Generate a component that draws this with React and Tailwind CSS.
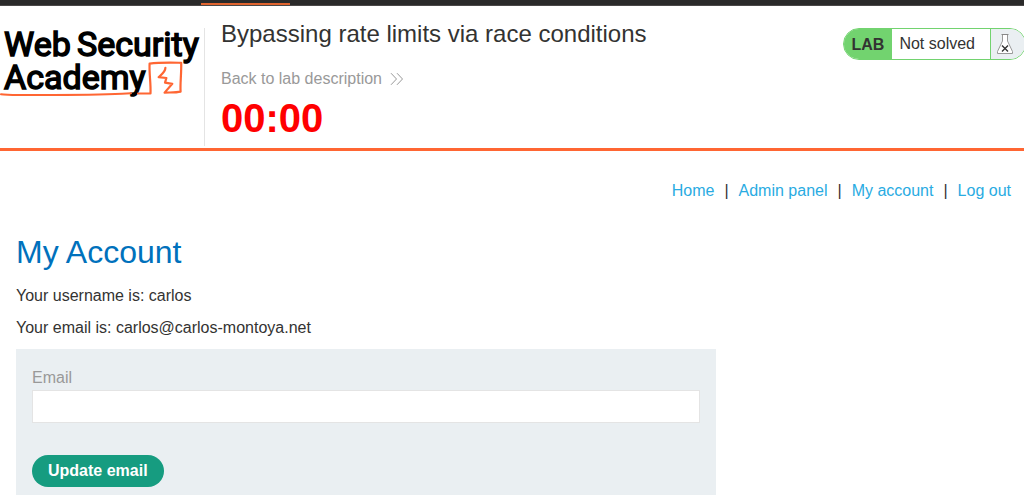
const navItems = ["Home", "Admin panel", "My account", "Log out"];

function AcademyLogo() {
  return (
    <svg viewBox="0 0 204 72" className="block h-[72px] w-[204px] overflow-visible" role="img" aria-label="Web Security Academy">
      <g fill="#000" stroke="#000" strokeWidth="1.5" fontFamily="Roboto, 'Liberation Sans', sans-serif" fontSize="34" fontWeight="400">
        <text x="4" y="28">Web</text>
        <text x="77" y="28">Security</text>
        <text x="4" y="61">Academy</text>
      </g>
      <g fill="none" stroke="#ff6633" strokeLinecap="round" strokeLinejoin="round">
        <path d="M1 66.3C8 67.6 20 67 40 66.9C80 66.9 105 66.5 122 65.7L131 65.2" strokeWidth="2" />
        <path d="M138 65.5L150.5 65.4C151 55 149 46 149.6 35.6C160 34.3 170 34.6 181.2 34.8C181.5 46 180 56 180.6 63.6C176 64.8 169 64.3 164.6 64.6L172.3 55.8L165 54.6L166.4 50L158.6 49.2C161 47 165.5 44 165.4 39.8" strokeWidth="2.2" />
      </g>
    </svg>
  );
}

function DoubleChevron() {
  return (
    <svg viewBox="0 0 14 14" className="h-3.5 w-3.5" fill="none" stroke="#999" strokeWidth="1" aria-hidden="true">
      <path d="M1 1.2L6.5 7L1 12.8M7 1.2L12.5 7L7 12.8" />
    </svg>
  );
}

function Flask() {
  return (
    <svg viewBox="0 0 18 22" className="h-[22px] w-[18px] shrink-0" fill="none" aria-hidden="true">
      <path d="M6.5 1.5V8L1.5 18.5V20.5H16.5V18.5L11.5 8V1.5Z" fill="#fff" stroke="#999" />
      <path d="M5.5 1.5H12.5" stroke="#888" />
      <path d="M6 12.5L12 18.5M12 12.5L6 18.5" stroke="#333" strokeWidth="1.4" />
    </svg>
  );
}

export default function App() {
  return (
    <div className="overflow-x-hidden bg-white font-['Liberation_Sans',Arial,sans-serif] text-base text-[#333332]">
      <div className="flex h-1.5 items-end border-b border-[#4a4848] bg-[#2a2a2a] pl-[201px]">
        <div className="h-0.5 w-[89px] bg-[#e0642f]" />
      </div>

      <header className="flex items-start border-b-3 border-[#ff6633] pb-0.5">
        <a href="#academy" className="mt-[22px] h-[118px] shrink-0 border-r border-[#e4e4e4]">
          <AcademyLogo />
        </a>
        <div className="flex-1 pl-4 pt-3">
          <h2 className="text-2xl leading-8">Bypassing rate limits via race conditions</h2>
          <a href="#description" className="mt-[17px] flex items-center gap-2 leading-6 text-[#999]">
            Back to lab description
            <DoubleChevron />
          </a>
          <p className="mt-[3px] text-[40px] font-bold leading-12 text-[#ff0000]">00:00</p>
        </div>
        <div className="-mr-0.5 mt-[22px] flex h-8 shrink-0 overflow-hidden rounded-full border border-[#72d36f] bg-white leading-[30px]">
          <span className="bg-[#72d36f] px-2 font-bold leading-8">LAB</span>
          <p className="border-r border-[#72d36f] pl-[7px] pr-[15px]">Not solved</p>
          <span className="flex items-center bg-[#eaeff2] pl-[5px] pr-[11px]">
            <Flask />
          </span>
        </div>
      </header>

      <nav className="flex justify-end gap-2.5 px-[13px] pt-7 leading-6">
        {navItems.map((item, index) => (
          <span key={item} className="flex gap-2.5">
            {index > 0 && <span>|</span>}
            <a href="#nav" className="text-[#29abe2]">{item}</a>
          </span>
        ))}
      </nav>

      <main className="px-4 pt-[25px]">
        <h1 className="text-[32px] leading-12 text-[#0071bc]">My Account</h1>
        <p className="mt-2 leading-6">Your username is: carlos</p>
        <p className="mt-2 leading-6">Your email is: carlos@carlos-montoya.net</p>
        <form className="mt-[9px] max-w-[700px] bg-[#eaeff2] px-4 pb-2 pt-[17px]" onSubmit={(event) => event.preventDefault()}>
          <label htmlFor="email" className="block leading-6 text-[#999]">Email</label>
          <input id="email" type="email" className="block h-[33px] w-full border border-[#e4e4e4] bg-white px-2 outline-none" />
          <button type="submit" className="mt-8 block h-8 rounded-full bg-[#169c80] px-4 font-bold text-white">
            Update email
          </button>
        </form>
      </main>
    </div>
  );
}
